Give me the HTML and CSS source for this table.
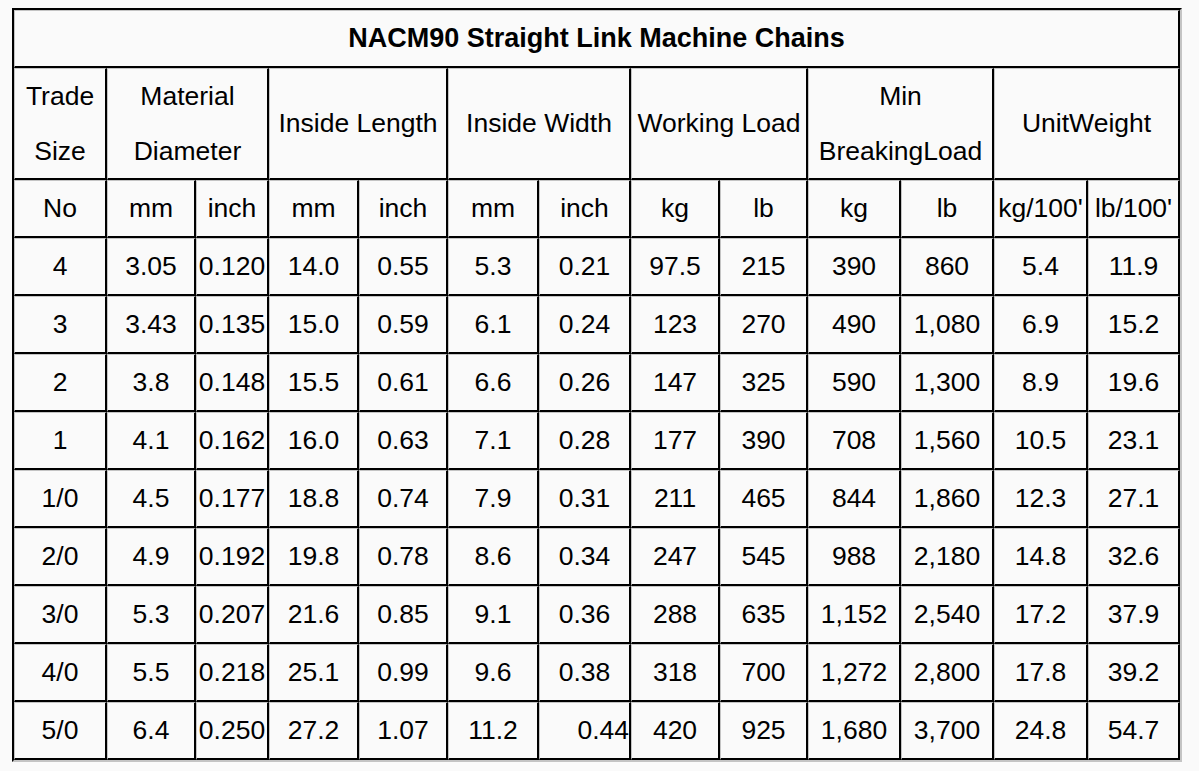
FILE: index.html
```html
<!DOCTYPE html>
<html>
<head>
<meta charset="utf-8">
<title>NACM90 Straight Link Machine Chains</title>
<link rel="stylesheet" href="styles.css">
</head>
<body>
<table class="chain-table">
  <colgroup>
    <col class="c93"><col class="c89"><col class="c73"><col class="c90"><col class="c89"><col class="c91"><col class="c92"><col class="c89"><col class="c88"><col class="c93"><col class="c93"><col class="c94"><col class="c92">
  </colgroup>
  <tr><td class="title" colspan="13">NACM90 Straight Link Machine Chains</td></tr>
  <tr class="two-line">
    <td>Trade<br>Size</td>
    <td colspan="2">Material<br>Diameter</td>
    <td colspan="2">Inside Length</td>
    <td colspan="2">Inside Width</td>
    <td colspan="2">Working Load</td>
    <td colspan="2">Min<br>BreakingLoad</td>
    <td colspan="2">UnitWeight</td>
  </tr>
  <tr>
    <td>No</td><td>mm</td><td>inch</td><td>mm</td><td>inch</td><td>mm</td><td>inch</td><td>kg</td><td>lb</td><td>kg</td><td>lb</td><td>kg/100'</td><td>lb/100'</td>
  </tr>
  <tr><td>4</td><td>3.05</td><td>0.120</td><td>14.0</td><td>0.55</td><td>5.3</td><td>0.21</td><td>97.5</td><td>215</td><td>390</td><td>860</td><td>5.4</td><td>11.9</td></tr>
  <tr><td>3</td><td>3.43</td><td>0.135</td><td>15.0</td><td>0.59</td><td>6.1</td><td>0.24</td><td>123</td><td>270</td><td>490</td><td>1,080</td><td>6.9</td><td>15.2</td></tr>
  <tr><td>2</td><td>3.8</td><td>0.148</td><td>15.5</td><td>0.61</td><td>6.6</td><td>0.26</td><td>147</td><td>325</td><td>590</td><td>1,300</td><td>8.9</td><td>19.6</td></tr>
  <tr><td>1</td><td>4.1</td><td>0.162</td><td>16.0</td><td>0.63</td><td>7.1</td><td>0.28</td><td>177</td><td>390</td><td>708</td><td>1,560</td><td>10.5</td><td>23.1</td></tr>
  <tr><td>1/0</td><td>4.5</td><td>0.177</td><td>18.8</td><td>0.74</td><td>7.9</td><td>0.31</td><td>211</td><td>465</td><td>844</td><td>1,860</td><td>12.3</td><td>27.1</td></tr>
  <tr><td>2/0</td><td>4.9</td><td>0.192</td><td>19.8</td><td>0.78</td><td>8.6</td><td>0.34</td><td>247</td><td>545</td><td>988</td><td>2,180</td><td>14.8</td><td>32.6</td></tr>
  <tr><td>3/0</td><td>5.3</td><td>0.207</td><td>21.6</td><td>0.85</td><td>9.1</td><td>0.36</td><td>288</td><td>635</td><td>1,152</td><td>2,540</td><td>17.2</td><td>37.9</td></tr>
  <tr><td>4/0</td><td>5.5</td><td>0.218</td><td>25.1</td><td>0.99</td><td>9.6</td><td>0.38</td><td>318</td><td>700</td><td>1,272</td><td>2,800</td><td>17.8</td><td>39.2</td></tr>
  <tr><td>5/0</td><td>6.4</td><td>0.250</td><td>27.2</td><td>1.07</td><td>11.2</td><td class="right">0.44</td><td>420</td><td>925</td><td>1,680</td><td>3,700</td><td>24.8</td><td>54.7</td></tr>
</table>
</body>
</html>
```
FILE: styles.css
```css
html, body {
  background: #fafafa;
}
body {
  margin: 8px;
  font-family: "Liberation Sans", Arial, Helvetica, sans-serif;
  color: #000;
}
.chain-table {
  margin-left: 4px;
  width: 1170px;
  table-layout: fixed;
  border-collapse: separate;
  border-spacing: 0;
  border-top: 2px solid #000;
  border-left: 2px solid #000;
  border-right: 2px solid #c4c4c4;
  border-bottom: 2px solid #c4c4c4;
  font-size: 26.5px;
}
.chain-table td {
  box-sizing: border-box;
  padding: 0;
  text-align: center;
  vertical-align: middle;
  white-space: nowrap;
  line-height: 55px;
  border-top: 1px solid #c4c4c4;
  border-left: 1px solid #c4c4c4;
  border-right: 2px solid #000;
  border-bottom: 2px solid #000;
}
.chain-table .two-line td {
  line-height: 54.5px;
}
.chain-table td.title {
  font-weight: bold;
  font-size: 27px;
}
.chain-table td.right {
  text-align: right;
}
.c73 { width: 73px; }
.c88 { width: 88px; }
.c89 { width: 89px; }
.c90 { width: 90px; }
.c91 { width: 91px; }
.c92 { width: 92px; }
.c93 { width: 93px; }
.c94 { width: 94px; }
```
